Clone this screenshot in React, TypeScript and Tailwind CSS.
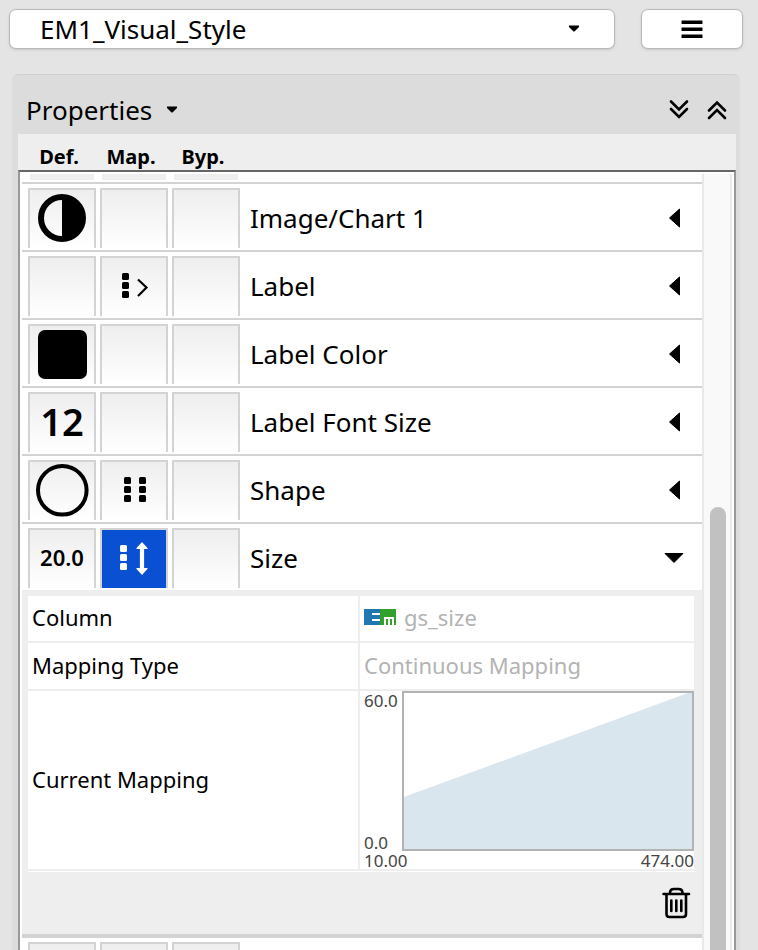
import React from "react";

type MapKind = "passthrough" | "discrete" | "continuous";

function Dots({ x }: { x: number }) {
  return (
    <g fill="currentColor">
      {[15, 24, 33].map((y) => (
        <rect key={y} x={x} y={y} width="7" height="7" rx="1.5" />
      ))}
    </g>
  );
}

function MapIcon({ kind }: { kind: MapKind }) {
  return (
    <svg viewBox="0 0 64 58" className="h-[58px] w-16" aria-hidden="true">
      {kind === "passthrough" && (
        <>
          <Dots x={20} />
          <path d="M36 21.5 L44.5 29.5 L36 38" fill="none" stroke="currentColor" strokeWidth="2.2" />
        </>
      )}
      {kind === "discrete" && (
        <>
          <Dots x={22} />
          <Dots x={37} />
        </>
      )}
      {kind === "continuous" && (
        <>
          <Dots x={18} />
          <path d="M40 13 L45 18.5 H41.500 V38.500 H45 L40 44 L35 38.500 H38.500 V18.500 H35 Z" fill="currentColor" stroke="currentColor" strokeWidth="1.2" strokeLinejoin="round" />
        </>
      )}
    </svg>
  );
}

function HalfCircle() {
  return (
    <svg viewBox="0 0 64 58" className="h-[58px] w-16" aria-hidden="true">
      <circle cx="32" cy="28" r="21" fill="none" stroke="black" strokeWidth="6" />
      <path d="M32 6 A22 22 0 0 1 32 50 Z" fill="black" />
    </svg>
  );
}

function ColorSwatch() {
  return (
    <svg viewBox="0 0 64 58" className="h-[58px] w-16" aria-hidden="true">
      <rect x="8" y="4" width="49" height="49" rx="7" fill="black" />
    </svg>
  );
}

function Ring() {
  return (
    <svg viewBox="0 0 64 58" className="h-[58px] w-16" aria-hidden="true">
      <circle cx="32.3" cy="28.3" r="24.3" fill="none" stroke="black" strokeWidth="4" />
    </svg>
  );
}

function Cell({ label, selected = false, children }: { label: string; selected?: boolean; children?: React.ReactNode }) {
  return (
    <button
      type="button"
      aria-label={label}
      className={
        "flex h-[60px] w-[68px] shrink-0 items-center justify-center border-2 border-b-0 border-[#d3d3d3] " +
        (selected ? "bg-[#0a50d3] text-white" : "bg-linear-to-b from-[#eeeeee] to-white text-black")
      }
    >
      {children}
    </button>
  );
}

interface Property {
  name: string;
  def?: React.ReactNode;
  map?: MapKind;
  open?: boolean;
}

const properties: Property[] = [
  { name: "Image/Chart 1", def: <HalfCircle /> },
  { name: "Label", map: "passthrough" },
  { name: "Label Color", def: <ColorSwatch /> },
  { name: "Label Font Size", def: <span className="pb-1 text-[38px] leading-10 font-semibold">12</span> },
  { name: "Shape", def: <Ring />, map: "discrete" },
  { name: "Size", def: <span className="pb-1 text-[22px] leading-7 font-semibold">20.0</span>, map: "continuous", open: true },
];

function PropertyRow({ name, def, map, open = false }: Property) {
  return (
    <li className={open ? "flex gap-1 pt-1 pb-0.5 pl-1.5" : "flex gap-1 border-b-2 border-[#d3d3d3] pt-1 pb-0.5 pl-1.5"}>
      <Cell label={name + " default value"}>{def}</Cell>
      <Cell label={name + " mapping"} selected={open}>
        {map && <MapIcon kind={map} />}
      </Cell>
      <Cell label={name + " bypass"} />
      <button type="button" aria-expanded={open} className="flex min-w-0 flex-1 items-center justify-between pl-1.5 text-left text-[26px] leading-9">
        <span>{name}</span>
        {open ? (
          <svg viewBox="0 0 20 20" className="mr-[18px] size-5 shrink-0" aria-hidden="true">
            <path d="M1 5.500 H19 L10 14.500 Z" stroke="black" strokeLinejoin="round" />
          </svg>
        ) : (
          <svg viewBox="0 0 20 20" className="mr-[18px] size-5 shrink-0" aria-hidden="true">
            <path d="M15.5 1 V19 L5.5 10 Z" stroke="black" strokeLinejoin="round" />
          </svg>
        )}
      </button>
    </li>
  );
}

function MappingChart() {
  return (
    <div className="flex flex-col text-[17px] leading-4 text-[#444444]">
      <div className="flex h-[160px]">
        <div className="flex w-[38px] shrink-0 flex-col justify-between pt-0.5">
          <span>60.0</span>
          <span>0.0</span>
        </div>
        <div className="min-w-0 flex-1 border-2 border-[#b3b3b3] bg-white">
          <svg viewBox="0 0 288 156" preserveAspectRatio="none" className="block size-full" role="img" aria-label="Size mapping from 10.00 to 474.00">
            <polygon points="0,104 284,0 288,0 288,156 0,156" fill="#d9e6ee" />
          </svg>
        </div>
      </div>
      <div className="flex justify-between pt-0.5">
        <span>10.00</span>
        <span>474.00</span>
      </div>
    </div>
  );
}

function EmLogo() {
  return (
    <svg viewBox="0 0 32 16" className="h-4 w-8 shrink-0" aria-hidden="true">
      <rect width="16" height="16" fill="#1f78b4" />
      <rect x="16" width="16" height="16" fill="#33a02c" />
      <path d="M8 4 H16 V6 H8 Z M8 10 H16 V12 H8 Z" fill="white" />
      <path d="M20 8 H30 V16 H28 V10 H26 V16 H24 V10 H22 V16 H20 Z" fill="white" />
    </svg>
  );
}

function MappingDetails() {
  return (
    <li className="border-b-4 border-[#d3d3d3] bg-[#eeeeee] px-1.5 pt-1.5 pb-3">
      <table className="w-full table-fixed border-collapse border-r-2 border-[#eeeeee] bg-white text-left text-[22px] leading-7">
        <colgroup>
          <col className="w-[331px]" />
          <col />
        </colgroup>
        <tbody>
          <tr className="h-[46px] border-b-2 border-[#eeeeee]">
            <th scope="row" className="border-r-2 border-[#eeeeee] pb-1 pl-1 font-normal">Column</th>
            <td className="pb-1 pl-1 text-[#b3b3b3]">
              <div className="flex items-center gap-2">
                <EmLogo />
                gs_size
              </div>
            </td>
          </tr>
          <tr className="h-12 border-b-2 border-[#eeeeee]">
            <th scope="row" className="border-r-2 border-[#eeeeee] pb-0.5 pl-1 font-normal">Mapping Type</th>
            <td className="pb-0.5 pl-1 text-[#b3b3b3]">Continuous Mapping</td>
          </tr>
          <tr className="h-[180px] border-b-2 border-[#eeeeee]">
            <th scope="row" className="border-r-2 border-[#eeeeee] pb-0.5 pl-1 font-normal">Current Mapping</th>
            <td className="pl-1">
              <MappingChart />
            </td>
          </tr>
        </tbody>
      </table>
      <div className="flex justify-end border-t border-white pt-2.5">
        <button type="button" aria-label="Remove mapping" className="flex size-10 items-center justify-center">
          <svg viewBox="0 0 40 40" className="size-10" fill="none" stroke="black" strokeWidth="2.6" strokeLinecap="round" strokeLinejoin="round" aria-hidden="true">
            <path d="M7.500 12 H33 M14 11 Q14 7 18 7 H22.500 Q26.500 7 26.500 11 M10.500 13 V32 Q10.500 35 13.500 35 H27 Q30 35 30 32 V13" />
            <path d="M15.300 18.500 V29 M20.300 18.500 V29 M25.300 18.500 V29" />
          </svg>
        </button>
      </div>
    </li>
  );
}

function Caret() {
  return (
    <svg viewBox="0 0 12 8" className="h-2 w-3" aria-hidden="true">
      <path d="M1 0.500 H11 V2 L6.500 6.500 H5.500 L1 2 Z" />
    </svg>
  );
}

export default function App() {
  return (
    <div className="flex h-screen flex-col overflow-hidden bg-[#e4e4e4] font-['Noto_Sans','Open_Sans',sans-serif] text-black">
      <div className="flex gap-[26px] pt-[9px] pr-[15px] pl-[9px]">
        <label className="relative block min-w-0 flex-1">
          <span className="sr-only">Visual style</span>
          <select className="h-10 w-full appearance-none rounded-[7px] border border-[#b8b8b8] bg-white pl-[30px] text-[26px] leading-9 shadow-sm">
            <option>EM1_Visual_Style</option>
          </select>
          <span className="pointer-events-none absolute inset-y-0 right-[35px] flex items-center">
            <Caret />
          </span>
        </label>
        <button type="button" aria-label="Options" className="flex h-10 w-[102px] items-center justify-center rounded-[7px] border border-[#b8b8b8] bg-white shadow-sm">
          <svg viewBox="0 0 22 18" className="h-[18px] w-[22px]" aria-hidden="true">
            <rect x="0.500" y="0.500" width="21" height="3.500" rx="0.500" />
            <rect x="0.500" y="7.500" width="21" height="3.500" rx="0.500" />
            <rect x="0.500" y="14.500" width="21" height="3.500" rx="0.500" />
          </svg>
        </button>
      </div>

      <section className="mt-[25px] mr-[18px] ml-3 flex min-h-0 flex-1 flex-col rounded-t-[7px] border-t border-[#cfcfcf] bg-[#dcdcdc] pr-1 pl-1.5">
        <div className="flex h-[59px] shrink-0 items-center justify-between pt-2.5 pr-[7px] pl-2">
          <button type="button" className="flex items-center gap-[14px] text-[26px] leading-9">
            Properties
            <Caret />
          </button>
          <div className="flex gap-[14px]">
            <button type="button" aria-label="Expand all">
              <svg viewBox="0 0 24 24" className="size-6" fill="none" stroke="black" strokeWidth="2.600" strokeLinecap="round" aria-hidden="true">
                <path d="M4 3.500 L12 11.500 L20 3.500 M4 11 L12 19 L20 11" />
              </svg>
            </button>
            <button type="button" aria-label="Collapse all">
              <svg viewBox="0 0 24 24" className="size-6" fill="none" stroke="black" strokeWidth="2.600" strokeLinecap="round" aria-hidden="true">
                <path d="M4 12.500 L12 4.500 L20 12.500 M4 20 L12 12 L20 20" />
              </svg>
            </button>
          </div>
        </div>

        <div className="flex h-9 shrink-0 items-end gap-1 bg-[#eeeeee] pl-[7px] text-[20px] leading-[26px] font-bold">
          <span className="w-[68px] text-center">Def.</span>
          <span className="w-[68px] text-center">Map.</span>
          <span className="w-[68px] text-center">Byp.</span>
        </div>

        <div className="flex min-h-0 flex-1 overflow-hidden border-x-2 border-t-2 border-x-[#999999] border-t-[#666666] bg-white px-0.5 pt-0.5">
          <ul className="min-w-0 flex-1">
            <li className="flex h-2.5 gap-2 border-b-2 border-[#d3d3d3] pb-0.5 pl-2">
              <span className="h-1.5 w-16 bg-[#eeeeee]" />
              <span className="h-1.5 w-16 bg-[#eeeeee]" />
              <span className="h-1.5 w-16 bg-[#eeeeee]" />
            </li>
            {properties.map((p) => (
              <PropertyRow key={p.name} {...p} />
            ))}
            <MappingDetails />
            <li className="flex gap-1 pt-1 pl-1.5">
              <Cell label="Next property default value" />
              <Cell label="Next property mapping" />
              <Cell label="Next property bypass" />
            </li>
          </ul>
          <div className="flex w-[30px] shrink-0 flex-col border-x-2 border-[#e9e9e9] bg-[#f9f9f9] pl-1.5">
            <div className="mt-[333px] w-4 flex-1 rounded-t-full bg-[#c1c1c1]" />
          </div>
        </div>
      </section>
    </div>
  );
}
